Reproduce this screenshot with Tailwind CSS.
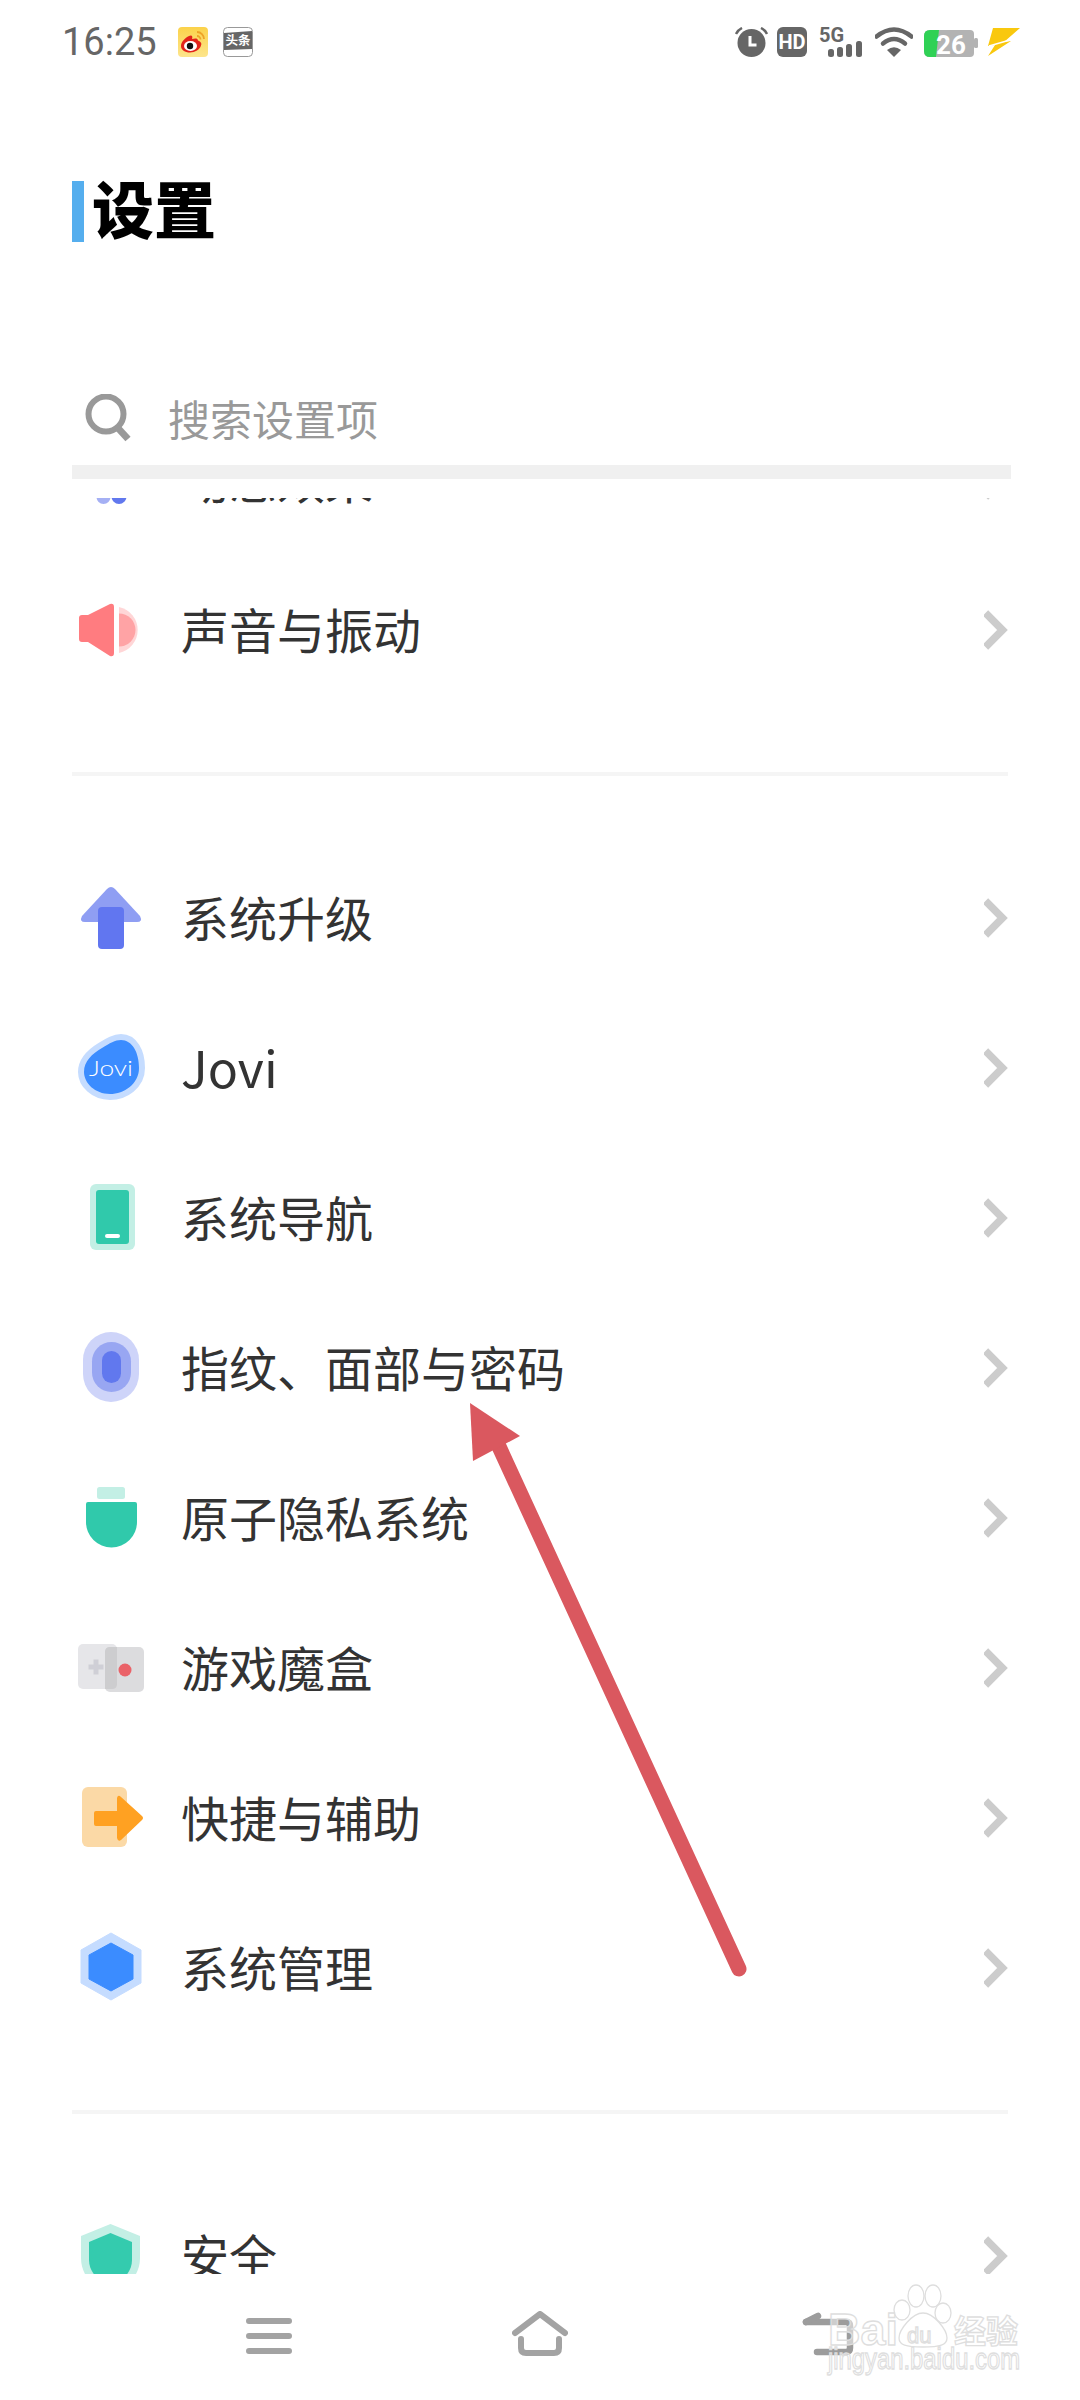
<!DOCTYPE html>
<html lang="zh-CN">
<head>
  <meta charset="UTF-8">
  <title>设置</title>
  <script src="https://cdn.jsdelivr.net/npm/@tailwindcss/browser@4"></script>
</head>
<body class="bg-white font-['Noto_Sans_CJK_SC',sans-serif]">
<div class="relative w-[1080px] h-[2400px] overflow-hidden bg-white">

  <!-- 状态栏 -->
  <div class="flex items-center h-[84px] pl-[62px] pr-[60px]">
    <span class="font-['Roboto',sans-serif] text-[38px] leading-[40px] text-[#666666] w-[93px]">16:25</span>
    <svg class="ml-[23px]" width="30" height="30" viewBox="0 0 30 30">
      <defs><linearGradient id="wb" x1="0" y1="0" x2="0" y2="1"><stop offset="0" stop-color="#fbd24a"/><stop offset="1" stop-color="#fde58c"/></linearGradient></defs>
      <rect width="30" height="30" rx="4" fill="url(#wb)"/>
      <path d="M3 19c0-4 4-8 8-10 3-1.500 4 .5 3 3 3-1 6-1 6 1.500 3 1 4 3 3 5-1 4-6 7-11 7-5 0-9-2.500-9-6.500z" fill="#e2231a"/>
      <ellipse cx="12.500" cy="19" rx="6.500" ry="5" fill="#fff"/>
      <circle cx="12" cy="19" r="3.200" fill="#111"/>
      <path d="M19 5a7 7 0 0 1 7 7M19 9a3.500 3.500 0 0 1 3.500 3.500" fill="none" stroke="#eea326" stroke-width="1.800"/>
    </svg>
    <svg class="ml-[15px]" width="30" height="30" viewBox="0 0 30 30">
      <rect x=".5" y=".5" width="29" height="29" rx="4" fill="#fff" stroke="#999" stroke-width="1"/>
      <path d="M1 6 L29 4 V22 L1 23z" fill="#666"/>
      <text x="15" y="18" text-anchor="middle" font-size="12.500" font-weight="700" fill="#fff">头条</text>
    </svg>

    <div class="ml-auto flex items-center h-[30px]">
      <svg width="33" height="30" viewBox="0 0 33 30">
        <circle cx="16.500" cy="16" r="14" fill="#666"/>
        <path d="M15 9v9h6.500" fill="none" stroke="#fff" stroke-width="3"/>
        <path d="M1 7 Q3 3 7 1M32 7 Q30 3 26 1" fill="none" stroke="#666" stroke-width="2.500"/>
      </svg>
      <div class="ml-[9px] w-[30px] h-[30px] rounded-[6px] bg-[#666666] flex items-center justify-center text-white font-['Roboto',sans-serif] font-bold text-[20px] leading-none">HD</div>
      <svg class="ml-[12px] overflow-visible" width="46" height="30" viewBox="0 0 46 30">
        <text x="0" y="15" font-family="Roboto" font-weight="700" font-size="20" fill="#666">5G</text>
        <rect x="9" y="22" width="6" height="8" rx="2.500" fill="#666"/>
        <rect x="18" y="20" width="6" height="10" rx="2.500" fill="#666"/>
        <rect x="27" y="17" width="6" height="13" rx="2.500" fill="#666"/>
        <rect x="37" y="14" width="6" height="16" rx="2.500" fill="#666"/>
      </svg>
      <svg class="ml-[10px]" width="38" height="30" viewBox="0 0 38 30">
        <path d="M1.500 9.500 Q19 -4.500 36.500 9.500" fill="none" stroke="#666" stroke-width="4.500" stroke-linecap="round"/>
        <path d="M8 16.500 Q19 7.500 30 16.500" fill="none" stroke="#666" stroke-width="4.500" stroke-linecap="round"/>
        <path d="M19 30 L12 23 Q19 17.500 26 23z" fill="#666"/>
      </svg>
      <svg class="ml-[11px] overflow-visible" width="54" height="30" viewBox="0 0 54 30">
        <path d="M6 3H46q4 0 4 4V26q0 4-4 4H6q-6 0-6-6V9q0-6 6-6z" fill="#b3b3b3"/>
        <rect x="50" y="11" width="4" height="10" rx="1.500" fill="#b3b3b3"/>
        <path d="M6 3H15L12 30H6q-6 0-6-6V9q0-6 6-6z" fill="#2fd155"/>
        <text x="27" y="26.500" text-anchor="middle" font-family="Roboto" font-weight="700" font-size="26" fill="#fff">26</text>
      </svg>
      <svg class="ml-[9px]" width="33" height="30" viewBox="0 0 33 30">
        <path d="M6 1H33L17 15L24 14L1 29L8 18L1 19z" fill="#f9c80e"/>
        <path d="M2 19L23 13" stroke="#ffffff" stroke-width="1.500"/>
      </svg>
    </div>
  </div>

  <!-- 标题 -->
  <div class="flex items-center mt-[97px] pl-[72px] h-[61px]">
    <div class="w-[12px] h-[61px] bg-[#55aeee]"></div>
    <h1 class="ml-[8px] pb-[8px] text-[62px] leading-[61px] font-black text-black">设置</h1>
  </div>

  <!-- 搜索 -->
  <div class="flex items-center mt-[148px] pl-[85px] h-[56px]">
    <svg width="46" height="48" viewBox="0 0 46 48">
      <circle cx="21" cy="20" r="17.500" fill="none" stroke="#999" stroke-width="6"/>
      <path d="M32 33 L43 45" fill="none" stroke="#999" stroke-width="7"/>
    </svg>
    <span class="ml-[37px] text-[42px] leading-[56px] text-[#999999]">搜索设置项</span>
  </div>
  <div class="mt-[19px] ml-[72px] w-[939px] h-[14px] bg-[#f0f0f0]"></div>

  <!-- 设置列表 -->
  <div class="mt-[19px] h-[1776px] overflow-hidden">
    <div class="-mt-[93px] pl-[72px] pr-[72px]">

      <div class="flex items-center h-[150px]">
        <svg class="mr-[29px]" width="80" height="80" viewBox="0 0 80 80">
          <path d="M31.500 38Q38.500 50 38.500 57A7 7 0 0 1 24.500 57Q24.500 50 31.500 38z" fill="#a5b0f4"/>
          <path d="M47 36Q54.500 49 54.500 56.500A7.500 7.500 0 0 1 39.500 56.500Q39.500 49 47 36z" fill="#6178ee"/>
        </svg>
        <span class="pb-[4px] text-[48px] leading-[60px] text-[#333333]">动态效果</span>
        <svg class="ml-auto" width="24" height="40" viewBox="0 0 24 40"><path d="M1.500 3 L18.500 20 L1.500 37" fill="none" stroke="#cccccc" stroke-width="7.500"/></svg>
      </div>

      <div class="flex items-center h-[150px]">
        <svg class="mr-[29px]" width="80" height="80" viewBox="0 0 80 80">
          <path d="M10 25h6L38 14q4-1 4 3v46q0 4-4 3L16 52h-6q-3 0-3-3V28q0-3 3-3z" fill="#ff7c80"/>
          <path d="M47 17a23.500 23.500 0 0 1 0 46z" fill="#ffd6d7"/>
          <path d="M47 23.500a16.500 16.500 0 0 1 0 33z" fill="#ffa3a5"/>
        </svg>
        <span class="pb-[4px] text-[48px] leading-[60px] text-[#333333]">声音与振动</span>
        <svg class="ml-auto" width="24" height="40" viewBox="0 0 24 40"><path d="M1.500 3 L18.500 20 L1.500 37" fill="none" stroke="#cccccc" stroke-width="7.500"/></svg>
      </div>

      <div class="flex items-center h-[138px]"><div class="w-full h-[4px] bg-[#f5f5f5]"></div></div>

      <div class="flex items-center h-[150px]">
        <svg class="mr-[29px]" width="80" height="80" viewBox="0 0 80 80">
          <path d="M35 11 Q39 7 43 11 L68 38 Q71 44 65 44 H13 Q7 44 10 38z" fill="#8f9ef3"/>
          <rect x="26" y="29" width="26" height="42" rx="4" fill="#6176f0"/>
        </svg>
        <span class="pb-[4px] text-[48px] leading-[60px] text-[#333333]">系统升级</span>
        <svg class="ml-auto" width="24" height="40" viewBox="0 0 24 40"><path d="M1.500 3 L18.500 20 L1.500 37" fill="none" stroke="#cccccc" stroke-width="7.500"/></svg>
      </div>

      <div class="flex items-center h-[150px]">
        <svg class="mr-[29px]" width="80" height="80" viewBox="0 0 80 80">
          <path d="M49 12C60 12 67 24 67 40C67 56 52 66 38 66C23 66 12 55 12 44C12 33 20 26 30 20C38 15 43 12 49 12z" fill="#3b8cff" stroke="#c5dcff" stroke-width="12" paint-order="stroke"/>
          <text x="17" y="48" font-family="Lato" font-weight="300" font-size="22" textLength="44" lengthAdjust="spacingAndGlyphs" fill="#fff">Jovi</text>
        </svg>
        <span class="pb-[4px] text-[50px] leading-[60px] text-[#333333]">Jovi</span>
        <svg class="ml-auto" width="24" height="40" viewBox="0 0 24 40"><path d="M1.500 3 L18.500 20 L1.500 37" fill="none" stroke="#cccccc" stroke-width="7.500"/></svg>
      </div>

      <div class="flex items-center h-[150px]">
        <svg class="mr-[29px]" width="80" height="80" viewBox="0 0 80 80">
          <rect x="18" y="6" width="45" height="66" rx="6" fill="#c3efe5"/>
          <rect x="24" y="12" width="33" height="54" rx="3" fill="#30c9ab"/>
          <rect x="33" y="56" width="15" height="4" rx="2" fill="#fff"/>
        </svg>
        <span class="pb-[4px] text-[48px] leading-[60px] text-[#333333]">系统导航</span>
        <svg class="ml-auto" width="24" height="40" viewBox="0 0 24 40"><path d="M1.500 3 L18.500 20 L1.500 37" fill="none" stroke="#cccccc" stroke-width="7.500"/></svg>
      </div>

      <div class="flex items-center h-[150px]">
        <svg class="mr-[29px]" width="80" height="80" viewBox="0 0 80 80">
          <rect x="11" y="4" width="56" height="70" rx="28" fill="#ced4f9"/>
          <rect x="20" y="14" width="39" height="50" rx="19.500" fill="#98a6f2"/>
          <rect x="30" y="23" width="19" height="32" rx="9.500" fill="#6178ee"/>
        </svg>
        <span class="pb-[4px] text-[48px] leading-[60px] text-[#333333]">指纹、面部与密码</span>
        <svg class="ml-auto" width="24" height="40" viewBox="0 0 24 40"><path d="M1.500 3 L18.500 20 L1.500 37" fill="none" stroke="#cccccc" stroke-width="7.500"/></svg>
      </div>

      <div class="flex items-center h-[150px]">
        <svg class="mr-[29px]" width="80" height="80" viewBox="0 0 80 80">
          <rect x="25" y="9" width="28" height="12" rx="2.500" fill="#c3efe5"/>
          <path d="M16 24h47q2 0 2 2v18a25.500 25.500 0 0 1-51 0V26q0-2 2-2z" fill="#30c9ab"/>
        </svg>
        <span class="pb-[4px] text-[48px] leading-[60px] text-[#333333]">原子隐私系统</span>
        <svg class="ml-auto" width="24" height="40" viewBox="0 0 24 40"><path d="M1.500 3 L18.500 20 L1.500 37" fill="none" stroke="#cccccc" stroke-width="7.500"/></svg>
      </div>

      <div class="flex items-center h-[150px]">
        <svg class="mr-[29px]" width="80" height="80" viewBox="0 0 80 80">
          <rect x="6" y="16" width="39" height="45" rx="5" fill="#e6e6e9"/>
          <rect x="33" y="19" width="39" height="45" rx="5" fill="#dcdcde"/>
          <path d="M38 19H45V56Q45 61 40 61H33V24Q33 19 38 19z" fill="#cdcdcf"/>
          <path d="M16.500 39h15M24 31.500v15" stroke="#cfcfd6" stroke-width="5"/>
          <circle cx="53" cy="42" r="6.500" fill="#ea6268"/>
        </svg>
        <span class="pb-[4px] text-[48px] leading-[60px] text-[#333333]">游戏魔盒</span>
        <svg class="ml-auto" width="24" height="40" viewBox="0 0 24 40"><path d="M1.500 3 L18.500 20 L1.500 37" fill="none" stroke="#cccccc" stroke-width="7.500"/></svg>
      </div>

      <div class="flex items-center h-[150px]">
        <svg class="mr-[29px]" width="80" height="80" viewBox="0 0 80 80">
          <rect x="10" y="9" width="45" height="60" rx="6" fill="#fbd9a6"/>
          <path d="M24 33H45V20Q46 16 49 19L70 38Q72 40 70 42L49 62Q46 64 45 60V48H24Q22 48 22 46V35Q22 33 24 33z" fill="#ffa122"/>
        </svg>
        <span class="pb-[4px] text-[48px] leading-[60px] text-[#333333]">快捷与辅助</span>
        <svg class="ml-auto" width="24" height="40" viewBox="0 0 24 40"><path d="M1.500 3 L18.500 20 L1.500 37" fill="none" stroke="#cccccc" stroke-width="7.500"/></svg>
      </div>

      <div class="flex items-center h-[150px]">
        <svg class="mr-[29px]" width="80" height="80" viewBox="0 0 80 80">
          <path d="M39 5 L69 22 V55 L39 72 L9 55 V22z" fill="#c5dcff" stroke="#c5dcff" stroke-width="1" stroke-linejoin="round"/>
          <path d="M39 15 L61 27 V51 L39 63 L17 51 V27z" fill="#3b8cff" stroke="#3b8cff" stroke-width="1" stroke-linejoin="round"/>
        </svg>
        <span class="pb-[4px] text-[48px] leading-[60px] text-[#333333]">系统管理</span>
        <svg class="ml-auto" width="24" height="40" viewBox="0 0 24 40"><path d="M1.500 3 L18.500 20 L1.500 37" fill="none" stroke="#cccccc" stroke-width="7.500"/></svg>
      </div>

      <div class="flex items-center h-[138px]"><div class="w-full h-[4px] bg-[#f5f5f5]"></div></div>

      <div class="flex items-center h-[150px]">
        <svg class="mr-[29px]" width="80" height="80" viewBox="0 0 80 80">
          <path d="M38.500 8 L68 20 V42C68 60 55 72 38.500 78C22 72 9 60 9 42V20z" fill="#c3efe5"/>
          <path d="M38.500 17 L60 26 V44C60 56 51 65 38.500 70C26 65 17 56 17 44V26z" fill="#34cbae"/>
        </svg>
        <span class="pb-[4px] text-[48px] leading-[60px] text-[#333333]">安全</span>
        <svg class="ml-auto" width="24" height="40" viewBox="0 0 24 40"><path d="M1.500 3 L18.500 20 L1.500 37" fill="none" stroke="#cccccc" stroke-width="7.500"/></svg>
      </div>
    </div>
  </div>

  <!-- 底部导航 -->
  <div class="flex items-start h-[126px] pt-[37px] pl-[246px]">
    <svg width="46" height="46" viewBox="0 0 46 46">
      <path d="M3 10H43M3 25H43M3 40H43" stroke="#a3a3a3" stroke-width="6" stroke-linecap="round"/>
    </svg>
    <svg class="ml-[220px]" width="56" height="46" viewBox="0 0 56 46">
      <path d="M3 22 L28 3 L53 22" fill="none" stroke="#a3a3a3" stroke-width="6" stroke-linecap="round" stroke-linejoin="round"/>
      <path d="M9 28V37Q9 42 14 42H42Q47 42 47 37V28" fill="none" stroke="#a3a3a3" stroke-width="6" stroke-linecap="round"/>
    </svg>
    <svg class="ml-[234px]" width="54" height="46" viewBox="0 0 54 46">
      <path d="M4 11H44Q48 11 48 15V37Q48 41 44 41H15" fill="none" stroke="#9c9c9c" stroke-width="6.500" stroke-linecap="round"/>
      <path d="M4 11L16 5" stroke="#9c9c9c" stroke-width="6.500" stroke-linecap="round"/>
    </svg>
  </div>

  <!-- 红色箭头标注 -->
  <svg class="absolute left-0 top-0 pointer-events-none" width="1080" height="2400" viewBox="0 0 1080 2400">
    <path d="M739 1969 L496 1440" stroke="#da585f" stroke-width="15" stroke-linecap="round"/>
    <path d="M470 1403 L520 1436 L473 1461z" fill="#da585f"/>
  </svg>

  <!-- 百度经验水印 -->
  <svg class="absolute left-[820px] top-[2280px] pointer-events-none" width="210" height="110" viewBox="820 2280 210 110">
    <g fill="#ffffff" fill-opacity=".5" stroke="#dedede" stroke-width="1.300">
      <text x="828" y="2345" font-family="Liberation Sans" font-weight="700" font-size="45">Bai</text>
      <ellipse cx="916" cy="2296" rx="8" ry="11"/>
      <ellipse cx="933" cy="2296" rx="8" ry="11"/>
      <ellipse cx="902" cy="2310" rx="8" ry="10"/>
      <ellipse cx="943" cy="2313" rx="8" ry="10"/>
      <path d="M923 2313C934 2313 947 2330 947 2338C947 2345 940 2347 923 2347C906 2347 899 2345 899 2338C899 2330 912 2313 923 2313z"/>
      <text x="907" y="2343" font-family="Liberation Sans" font-size="22">du</text>
      <text x="954" y="2343" font-size="32" font-weight="700">经验</text>
      <text x="828" y="2369" font-family="Liberation Sans" font-size="29" textLength="192" lengthAdjust="spacingAndGlyphs">jingyan.baidu.com</text>
    </g>
  </svg>
</div>
</body>
</html>
